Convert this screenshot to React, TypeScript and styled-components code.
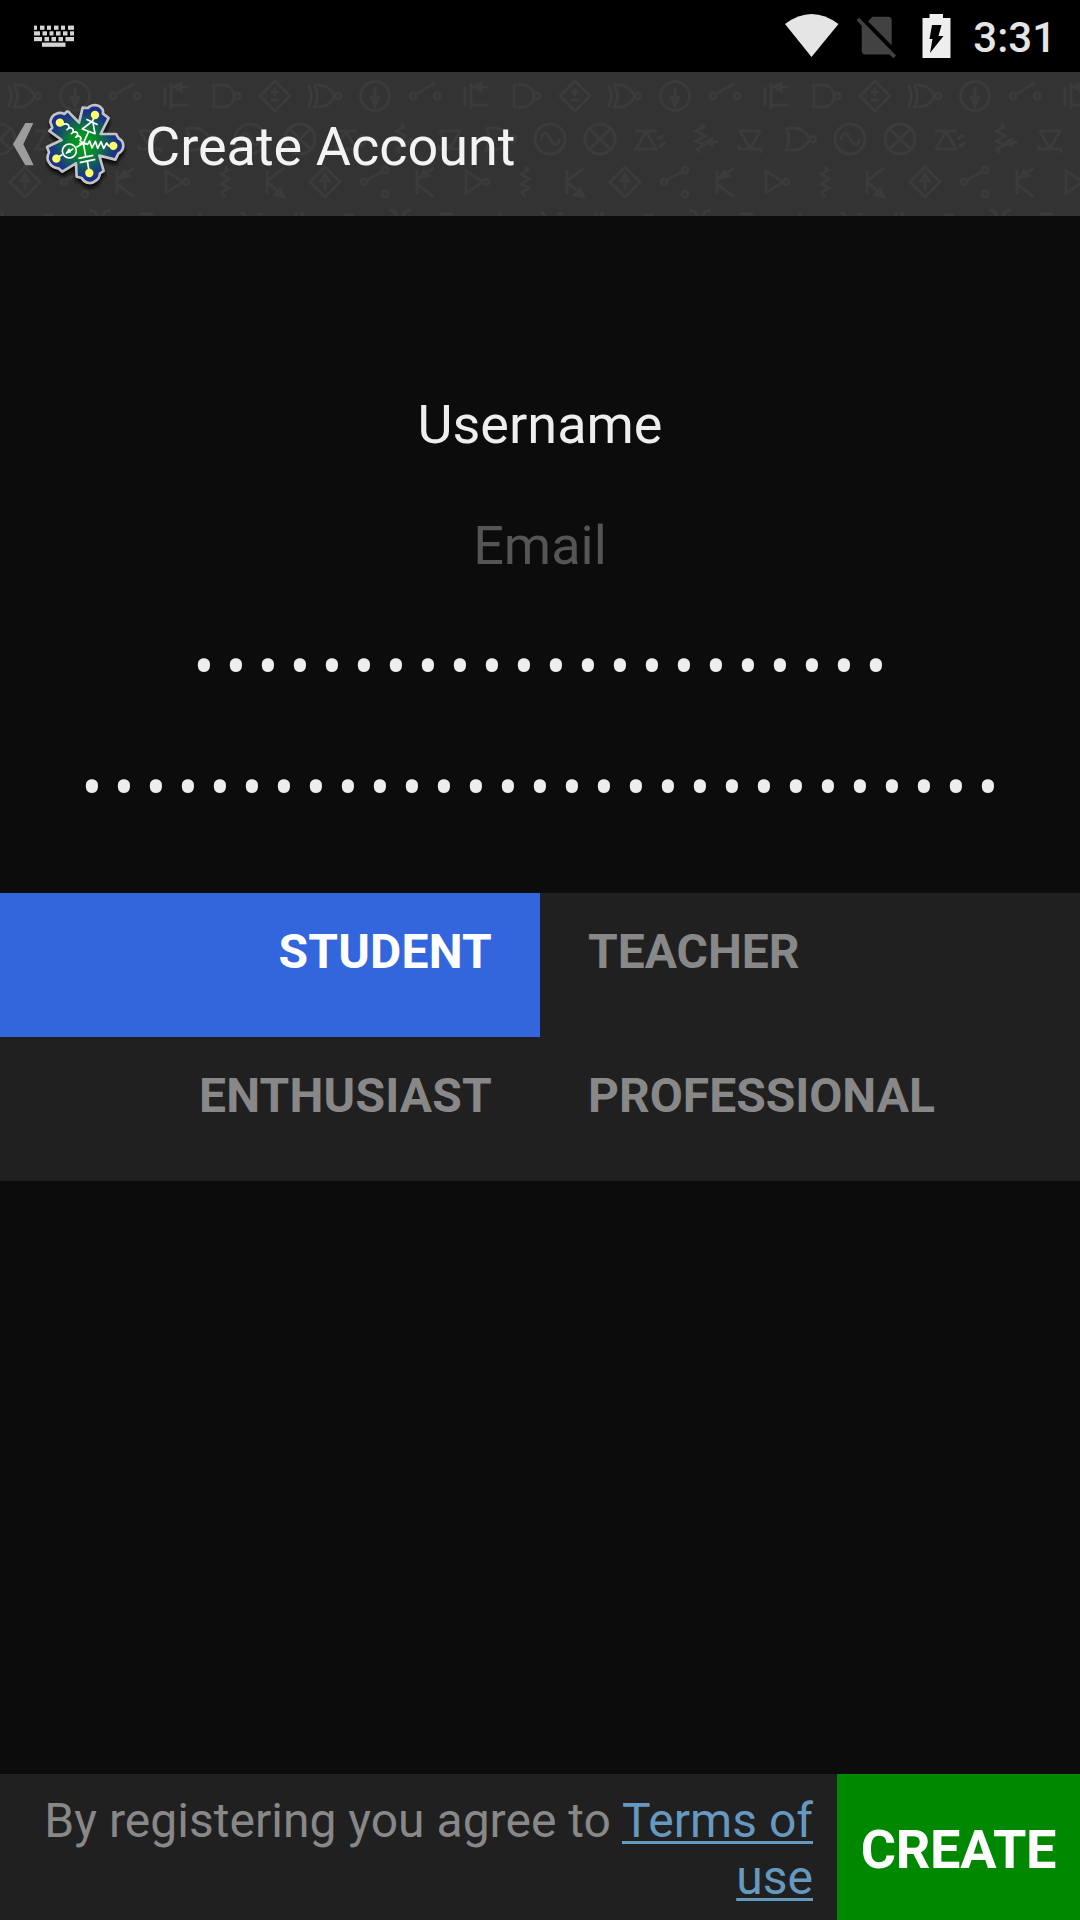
import React from "react";
import styled, { createGlobalStyle } from "styled-components";

const GlobalStyle = createGlobalStyle`
  * { box-sizing: border-box; }
  body { margin: 0; background: #0c0c0c; }
`;

const Screen = styled.div`
  display: flex;
  flex-direction: column;
  width: 1080px;
  height: 1920px;
  overflow: hidden;
  background: #0c0c0c;
  color: #eee;
  font-family: Roboto, "Liberation Sans", sans-serif;
`;

const StatusBar = styled.header`
  display: flex;
  flex: none;
  align-items: center;
  justify-content: space-between;
  height: 72px;
  padding: 0 24px 0 34px;
  background: #000;
`;

const StatusIcons = styled.div`
  display: flex;
  align-items: center;
`;

const Clock = styled.time`
  margin-left: 19px;
  padding-top: 3px;
  font-size: 42px;
  font-weight: 500;
  line-height: 50px;
  color: #e5e5e5;
`;

const ActionBar = styled.div`
  display: grid;
  flex: none;
  height: 144px;
  background: #333;
`;

const Backdrop = styled.svg`
  grid-area: 1 / 1;
  display: block;
`;

const ActionContent = styled.div`
  grid-area: 1 / 1;
  z-index: 1;
  display: flex;
  align-items: center;
`;

const Title = styled.h1`
  margin: 6px 0 0 14px;
  font-size: 54px;
  font-weight: 400;
  line-height: 64px;
  color: #f3f3f3;
`;

const Form = styled.main`
  display: flex;
  flex: none;
  flex-direction: column;
  height: 677px;
  padding-top: 148px;
`;

const Field = styled.div<{ $hint?: boolean }>`
  height: 121px;
  padding-top: 29px;
  font-size: 54px;
  line-height: 64px;
  text-align: center;
  color: ${(p) => (p.$hint ? "#555" : "#eee")};
`;

const Mask = styled.div`
  display: flex;
  justify-content: center;
  margin-top: -2px;
  font-family: "Open Sans", "Noto Sans", sans-serif;
  font-size: 58px;
`;

const MaskChar = styled.span`
  width: 32px;
  text-align: center;
`;

const Roles = styled.div`
  display: grid;
  flex: none;
  grid-template-columns: 1fr 1fr;
  grid-auto-rows: 144px;
`;

const Role = styled.div<{ $selected?: boolean; $align: "left" | "right" }>`
  padding: 31px 48px 0;
  font-size: 48px;
  font-weight: 700;
  line-height: 56px;
  letter-spacing: ${(p) => (p.$align === "right" ? "0.2px" : "0")};
  text-align: ${(p) => p.$align};
  color: ${(p) => (p.$selected ? "#fff" : "#888")};
  background: ${(p) => (p.$selected ? "#3366dd" : "#202020")};
`;

const Footer = styled.footer`
  display: flex;
  flex: none;
  height: 146px;
  margin-top: auto;
  background: #202020;
`;

const Agreement = styled.p`
  flex: 1;
  margin: 0;
  padding: 18px 24px 0 24px;
  font-size: 48px;
  line-height: 57px;
  letter-spacing: 0.02px;
  text-align: right;
  color: #888;
`;

const TermsLink = styled.span`
  color: #6699c0;
  text-decoration: underline;
  text-decoration-thickness: 3px;
  text-decoration-skip-ink: none;
  text-underline-offset: 4px;
`;

const CreateButton = styled.div`
  display: flex;
  align-items: center;
  justify-content: center;
  width: 243px;
  padding-top: 6px;
  font-size: 54px;
  font-weight: 700;
  line-height: 64px;
  letter-spacing: -0.3px;
  color: #fff;
  background: #008800;
`;

const keyRows: [number, number[][]][] = [
  [0, [[0, 3], [6, 4.5], [13, 4], [20, 4.5], [27, 4], [34, 6]]],
  [5.7, [[0, 6], [8.5, 4.5], [15.5, 4], [22, 4.5], [29, 4.5], [36, 4]]],
  [11.4, [[0, 8], [10.5, 4.5], [17.5, 4.5], [24.5, 4.5], [31.5, 8.5]]],
  [17, [[8, 23.5]]],
];

function KeyboardIcon() {
  return (
    <svg width="40" height="24" viewBox="0 0 40 24" fill="#d4d4d4">
      {keyRows.map(([y, keys]) =>
        keys.map(([x, w]) => <rect key={`${x}-${y}`} x={x} y={y + 1.6} width={w} height="4.2" />)
      )}
    </svg>
  );
}

function SystemIcons() {
  return (
    <svg width="170" height="72" viewBox="0 0 170 72">
      <path d="M1 24Q27.500 4 54.500 24L27.500 57Z" fill="#e5e5e5" />
      <g fill="#424242">
        <path d="M84 21.300L88.500 16.700H104a3.700 3.700 0 0 1 3.700 3.700V45.300Z" />
        <path d="M77.700 22L108 53Q107 54.500 104 54.500H81.700a4 4 0 0 1-4-4Z" />
        <path d="M75 17.700L112 55.500L109.300 58.200L72.500 20.200Z" />
      </g>
      <path d="M145.500 14H159v4h7.500v40H138.500V18h7Z" fill="#eee" />
      <path d="M148 25h9.500l-3 11h5L146 53l2.500-14h-3Z" fill="#000" />
    </svg>
  );
}

/* One horizontal period of the schematic-symbol wallpaper. */
function SymbolTile() {
  return (
    <>
      <g transform="translate(0 24)">
        <path d="M8 -11q7 11 0 22M14 -11h5q10 0 16 11q-6 11-16 11h-5q7-11 0-22" />
        <circle cx="38" cy="0" r="3" />
        <circle cx="75" cy="0" r="14.500" />
        <path d="M75 -9V4" />
        <path d="M71 1h8l-4 9Z" fill="#3b3b3b" />
        <circle cx="113" cy="0" r="3" />
        <circle cx="137" cy="0" r="3" />
        <path d="M116 -2L135 -13" />
        <path d="M165 -9V10M171 -13V13M171 9H188M177 -9H188" />
        <path d="M174 -9l7-4v8Z" fill="#3b3b3b" />
        <path d="M214 -11h9a11 11 0 0 1 0 22h-9Z" />
        <circle cx="237" cy="0" r="3" />
        <path d="M275 -15L290 0L275 15L260 0ZM275 -8v8M271 -4h8M271 4h8" />
      </g>
      <g transform="translate(0 67)">
        <circle cx="0" cy="0" r="15" />
        <circle cx="300" cy="0" r="15" />
        <path d="M-10 -10L10 10M-10 10L10 -10M290 -10L310 10M290 10L310 -10" />
        <path d="M35 -8h22M36 10h20L46 -8ZM57 0l7-4M59 8l7-5" />
        <path d="M101 -15l3 3l-8 4l9 5l-9 5l9 4l-8 4l3 4M109 3h9" />
        <path d="M106 3l6-3v6Z" fill="#3b3b3b" />
        <path d="M140 -8h20l-10 18ZM139 6v4h22v4" />
        <path d="M186 -11h8q10 0 16 11q-6 11-16 11h-8q6-11 0-22" />
        <circle cx="213" cy="0" r="3" />
        <circle cx="250" cy="0" r="15" />
        <path d="M241 1q2-9 6-6l6 9q4 5 7-4" />
      </g>
      <g transform="translate(0 110)">
        <path d="M25 -15L40 0L25 15L10 0ZM25 -7V8" />
        <path d="M21 -1h8l-4-7Z" fill="#3b3b3b" />
        <circle cx="64" cy="0" r="3" />
        <circle cx="85" cy="-12" r="3" />
        <circle cx="85" cy="12" r="3" />
        <path d="M67 -2L82 -10M117 -12V12M117 -2L134 -14M117 2L134 15" />
        <path d="M120 -4l4-7l5 5Z" fill="#3b3b3b" />
        <path d="M166 -11V11L183 0ZM225 -15l3 3l-7 4l8 5l-8 5l8 4l-7 4l3 5M267 -12V12M267 -1L284 -14M267 0L281 12" />
        <circle cx="186" cy="0" r="3" />
        <path d="M275 13l5-6l4 8Z" fill="#3b3b3b" />
      </g>
      <path d="M89 138q7 1 8 6M111 138q-7 1-8 6M140 142h13M200 140v4M241 140l5 4M257 142h6M296 140v4M302 140v4M2 140v4M44 143h10" />
    </>
  );
}

function Wallpaper() {
  return (
    <Backdrop width="1080" height="144" viewBox="0 0 1080 144" fill="none" stroke="#3b3b3b" strokeWidth="3">
      {[0, 300, 600, 900].map((x) => (
        <g key={x} transform={`translate(${x} 0)`}>
          <SymbolTile />
        </g>
      ))}
    </Backdrop>
  );
}

const outline =
  "M151 366Q154 346 169 341Q181 336 193 342L201 334Q207 334 210 340L237 368L248 323L264 324Q271 315 286 315Q299 316 307 327Q310 332 309 341L326 354L302 402L348 402L356 415Q370 422 370 438Q369 453 355 461L346 479L298 467L311 513L300 520Q298 537 286 543Q278 550 268 549Q253 548 245 534L230 530L228 490L187 515L177 506Q155 502 147 487Q138 474 147 457L141 441L185 420L148 393L157 383Z";

function HomeButton() {
  return (
    <svg width="131" height="144" viewBox="0 216 393 432" fill="none" strokeLinejoin="round">
      <defs>
        <radialGradient id="board" gradientUnits="userSpaceOnUse" cx="250" cy="430" r="108">
          <stop offset="0" stopColor="#00a514" />
          <stop offset=".35" stopColor="#078b2a" />
          <stop offset=".85" stopColor="#1b3981" />
          <stop offset="1" stopColor="#1b2f88" />
        </radialGradient>
        <filter id="soft" x="-20%" y="-20%" width="140%" height="140%">
          <feGaussianBlur stdDeviation="5" />
        </filter>
      </defs>
      <path d="M76 369h24L70 433l31 63H76L39 433Z" fill="#9d9d9d" />
      <path d={outline} transform="translate(1 12)" fill="#111" stroke="#111" strokeWidth="8" filter="url(#soft)" />
      <path d={outline} fill="url(#board)" stroke="#c4c4c4" strokeWidth="8" />
      <g stroke="#fff" strokeWidth="5">
        <path d="M188 374q10-5 17 1q6 7-4 14q8-10 17-2q5 8-4 14q10-9 18-2q4 8-5 13q9-7 14-1q4 6-1 10L250 430" />
        <path d="M250 430L266 394M247 387L285 401L278 363ZM259 358L293 374M276 366L285 347" />
        <path d="M250 430L263 433L269 423L276 444L286 424L293 445L303 425L311 445L320 429L326 438H340" />
        <path d="M250 430L257 468M235 475L280 466M239 488L286 478M262 483L268 517" />
        <path d="M238 430H260M250 430L229 442M187 464L168 475M198 460L220 446" />
        <circle cx="208" cy="453" r="21" />
      </g>
      <path d="M196 461L207 444L214 457Z" fill="#fff" />
      <g fill="#ffff66">
        <circle cx="179.500" cy="368" r="12.500" />
        <circle cx="285" cy="345" r="12.500" />
        <circle cx="340" cy="437.500" r="12.500" />
        <circle cx="268" cy="519" r="12.500" />
        <circle cx="169" cy="476" r="12.500" />
      </g>
    </svg>
  );
}

function MaskedText({ length }: { length: number }) {
  return (
    <Mask>
      {Array.from({ length }, (_, i) => (
        <MaskChar key={i}>•</MaskChar>
      ))}
    </Mask>
  );
}

export default function App() {
  return (
    <Screen>
      <GlobalStyle />
      <StatusBar>
        <KeyboardIcon />
        <StatusIcons>
          <SystemIcons />
          <Clock>3:31</Clock>
        </StatusIcons>
      </StatusBar>
      <ActionBar>
        <Wallpaper />
        <ActionContent>
          <HomeButton />
          <Title>Create Account</Title>
        </ActionContent>
      </ActionBar>
      <Form>
        <Field>Username</Field>
        <Field $hint>Email</Field>
        <Field><MaskedText length={22} /></Field>
        <Field><MaskedText length={29} /></Field>
      </Form>
      <Roles>
        <Role $align="right" $selected>STUDENT</Role>
        <Role $align="left">TEACHER</Role>
        <Role $align="right">ENTHUSIAST</Role>
        <Role $align="left">PROFESSIONAL</Role>
      </Roles>
      <Footer>
        <Agreement>
          By registering you agree to <TermsLink>Terms of use</TermsLink>
        </Agreement>
        <CreateButton>CREATE</CreateButton>
      </Footer>
    </Screen>
  );
}
